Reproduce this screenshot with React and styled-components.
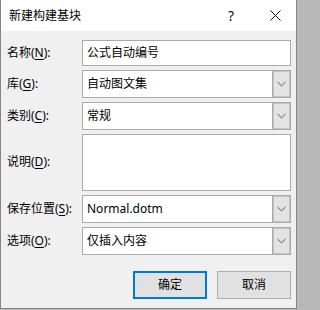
import React from "react";
import styled, { createGlobalStyle } from "styled-components";

const Global = createGlobalStyle`
  html, body { margin: 0; padding: 0; background: #b8b8b8; }
  * { box-sizing: border-box; }
`;

const FONT = `"Noto Sans", "Noto Sans CJK SC", sans-serif`;

const Window = styled.div`
  width: 297px;
  height: 309px;
  border: 1px solid #858585;
  border-top: none;
  background: #f0f0f0;
  display: flex;
  flex-direction: column;
  font-family: ${FONT};
  font-size: 12px;
  color: #000;
`;

const TitleBar = styled.div`
  height: 31px;
  background: #fff;
  display: flex;
  align-items: center;
  padding-left: 8px;
`;

const Title = styled.div`
  flex: 1;
  font-size: 12px;
  line-height: 16px;
`;

const TitleBtn = styled.div`
  width: ${(p) => p.$w}px;
  height: 31px;
  display: flex;
  align-items: center;
  justify-content: center;
  font-size: 14px;
  color: #111;
`;

const Body = styled.div`
  flex: 1;
  padding: 9px 5px 0 6px;
  display: flex;
  flex-direction: column;
`;

const Form = styled.div`
  display: grid;
  grid-template-columns: 75px 1fr;
  row-gap: 4px;
  align-items: center;
`;

const Label = styled.div`
  line-height: 16px;
  white-space: nowrap;
  margin-top: -1px;
`;

const Key = styled.span`
  text-decoration: underline;
  text-underline-offset: 2px;
`;

const Field = styled.div`
  height: ${(p) => p.$h}px;
  background: #fff;
  border: 1px solid #a9a9a9;
  display: flex;
  align-items: center;
  padding-left: 4px;
  line-height: 16px;
`;

const Select = styled.div`
  height: 28px;
  background: #fff;
  border: 1px solid #a9a9a9;
  display: flex;
  align-items: stretch;
`;

const SelectText = styled.div`
  flex: 1;
  display: flex;
  align-items: center;
  padding-left: 4px;
  line-height: 16px;
`;

const Arrow = styled.div`
  width: 17px;
  background: #e3e3e3;
  border: 1px solid #c4c4c4;
  box-shadow: -1px 0 0 #a9a9a9;
  display: flex;
  align-items: center;
  justify-content: center;
`;

const Buttons = styled.div`
  display: flex;
  justify-content: flex-end;
  gap: 10px;
  margin-top: 16px;
`;

const Button = styled.div`
  width: 74px;
  height: 28px;
  background: #e1e1e1;
  border: ${(p) => (p.$primary ? "2px solid #0078d7" : "1px solid #adadad")};
  display: flex;
  align-items: center;
  justify-content: center;
  line-height: 16px;
`;

const Chevron = () => (
  <svg width="9" height="6" viewBox="0 0 9 6">
    <polyline points="0.5,1 4.5,4.8 8.5,1" fill="none" stroke="#5a5a5a" strokeWidth="1" />
  </svg>
);

const Close = () => (
  <svg width="11" height="11" viewBox="0 0 11 11">
    <path d="M0.5 0.5 L10.5 10.5 M10.5 0.5 L0.5 10.5" stroke="#111" strokeWidth="1" />
  </svg>
);

const Dropdown = ({ children }) => (
  <Select>
    <SelectText>{children}</SelectText>
    <Arrow>
      <Chevron />
    </Arrow>
  </Select>
);

export default function App() {
  return (
    <>
      <Global />
      <Window>
        <TitleBar>
          <Title>新建构建基块</Title>
          <TitleBtn $w={46}>?</TitleBtn>
          <TitleBtn $w={42}>
            <Close />
          </TitleBtn>
        </TitleBar>
        <Body>
          <Form>
            <Label>
              名称(<Key>N</Key>):
            </Label>
            <Field $h={26}>公式自动编号</Field>
            <Label>
              库(<Key>G</Key>):
            </Label>
            <Dropdown>自动图文集</Dropdown>
            <Label>
              类别(<Key>C</Key>):
            </Label>
            <Dropdown>常规</Dropdown>
            <Label>
              说明(<Key>D</Key>):
            </Label>
            <Field $h={57} />
            <Label>
              保存位置(<Key>S</Key>):
            </Label>
            <Dropdown>Normal.dotm</Dropdown>
            <Label>
              选项(<Key>O</Key>):
            </Label>
            <Dropdown>仅插入内容</Dropdown>
          </Form>
          <Buttons>
            <Button $primary>确定</Button>
            <Button>取消</Button>
          </Buttons>
        </Body>
      </Window>
    </>
  );
}
